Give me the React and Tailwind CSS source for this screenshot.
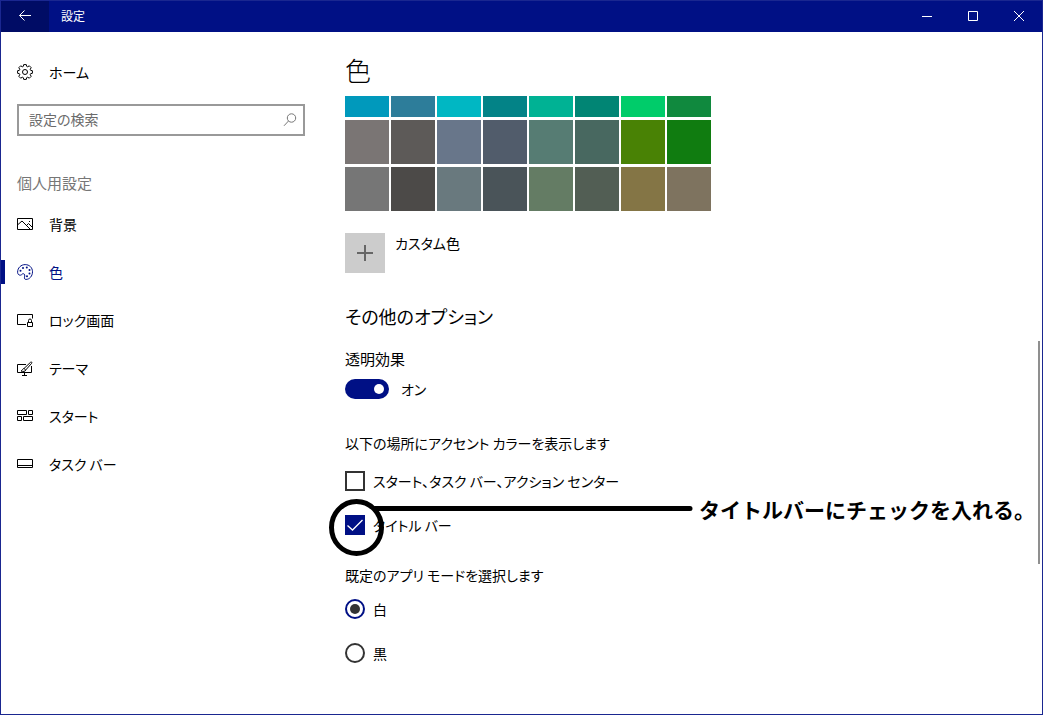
import React, { useState } from 'react';

const HomeIcon = () => (
  <svg className="w-4 h-4" viewBox="0 0 16 16" fill="none" stroke="currentColor">
    <path d="M6.7 0.6h2.6l.4 1.8 1 .4 1.6-1 1.9 1.9-1 1.6.4 1 1.8.4v2.6l-1.8.4-.4 1 1 1.6-1.9 1.9-1.6-1-1 .4-.4 1.8H6.7l-.4-1.8-1-.4-1.6 1-1.9-1.9 1-1.6-.4-1L.6 9.3V6.700l1.800-.4.4-1-1-1.600 1.900-1.900 1.600 1 1-.4z" />
    <circle cx="8" cy="8" r="2.5" />
  </svg>
);

const PictureIcon = () => (
  <svg className="w-4 h-4" viewBox="0 0 16 16" fill="none" stroke="currentColor">
    <path d="M0.5 2.5h15v11H0.5z" />
    <path d="M1 8.5l4-3.5 8 8M9.5 9.5l2-2 4 4" />
    <path d="M12 5.5h1" />
  </svg>
);

const PaletteIcon = () => (
  <svg className="w-4 h-4" viewBox="0 0 16 16" fill="none" stroke="currentColor">
    <path d="M0.6 8.2C.6 3.8 4 .6 8.2.6c4.2 0 7.3 3 7.3 7.2 0 4.3-3 7.6-6.4 7.6-1.5 0-2-1-1.6-2.2.5-1.5.4-3.200-1.100-3.500-1.300-.2-1.600 1.500-3.100 1.500C1.500 11.200.6 9.800.6 8.200z" />
    <g fill="currentColor" stroke="none">
      <circle cx="3.5" cy="6.8" r="1" />
      <circle cx="6" cy="4" r="1" />
      <circle cx="9.8" cy="3.5" r="1" />
      <circle cx="12.5" cy="6" r="1" />
      <circle cx="12.5" cy="9.5" r="1" />
      <circle cx="10" cy="12.3" r="1" />
    </g>
  </svg>
);

const LockScreenIcon = () => (
  <svg className="w-4 h-4" viewBox="0 0 16 16" fill="none" stroke="currentColor">
    <path d="M9 12.5H0.5v-10h15v4" />
    <path d="M10.5 10.5h5v4h-5zM11.5 10.5v-2a1.5 1.5 0 0 1 3 0v2" />
  </svg>
);

const ThemeIcon = () => (
  <svg className="w-4 h-4" viewBox="0 0 16 16" fill="none" stroke="currentColor">
    <path d="M9 4.5H0.5v8h14V6M7.5 13v2M5 15.5h5" />
    <path d="M7 8.5l6.5-6.2c1-.8 1.9.2 1.1 1.1L8.7 10zM7 8.5c-1.500 0-1.600 2-3 2.500 2 .8 4.500.6 4.700-1" />
  </svg>
);

const StartIcon = () => (
  <svg className="w-4 h-4" viewBox="0 0 16 16" fill="none" stroke="currentColor">
    <path d="M0.5 2.5h9v4h-9zM11.5 2.5h4v4h-4zM0.5 8.5h4v4h-4zM6.5 8.5h9v4h-9z" />
  </svg>
);

const TaskbarIcon = () => (
  <svg className="w-4 h-4" viewBox="0 0 16 16" fill="none" stroke="currentColor">
    <path d="M0.5 3.5h15v8H0.5zM0.5 9.5h15" />
  </svg>
);

const navItems = [
  { label: '背景', Icon: PictureIcon },
  { label: '色', Icon: PaletteIcon },
  { label: 'ロック画面', Icon: LockScreenIcon },
  { label: 'テーマ', Icon: ThemeIcon },
  { label: 'スタート', Icon: StartIcon },
  { label: 'タスク バー', Icon: TaskbarIcon },
];

// The first row is partly scrolled under the page heading
const swatchRows = [
  {
    height: 'h-[21px]',
    colors: ['bg-[#0099bc]', 'bg-[#2d7d9a]', 'bg-[#00b7c3]', 'bg-[#038387]', 'bg-[#00b294]', 'bg-[#018574]', 'bg-[#00cc6a]', 'bg-[#10893e]'],
  },
  {
    height: 'h-11',
    colors: ['bg-[#7a7574]', 'bg-[#5d5a58]', 'bg-[#68768a]', 'bg-[#515c6b]', 'bg-[#567c73]', 'bg-[#486860]', 'bg-[#498205]', 'bg-[#107c10]'],
  },
  {
    height: 'h-11',
    colors: ['bg-[#767676]', 'bg-[#4c4a48]', 'bg-[#69797e]', 'bg-[#4a5459]', 'bg-[#647c64]', 'bg-[#525e54]', 'bg-[#847545]', 'bg-[#7e735f]'],
  },
];

const TitleBar = () => (
  <header className="flex h-[31px] bg-[#001085] text-white">
    <button aria-label="戻る" className="flex w-12 items-center justify-center bg-[#000c65] pb-px">
      <svg className="h-4 w-4" viewBox="0 0 16 16" fill="none" stroke="currentColor">
        <path d="M14 7.5H2.5M7.5 2.5l-5 5 5 5" />
      </svg>
    </button>
    <h1 className="flex flex-1 items-center pb-0.5 pl-3 text-xs">設定</h1>
    <button aria-label="最小化" className="flex w-[46px] items-center justify-center pb-px">
      <svg className="h-[10px] w-[10px]" viewBox="0 0 10 10" stroke="currentColor">
        <path d="M0 5.5h10" />
      </svg>
    </button>
    <button aria-label="最大化" className="flex w-[46px] items-center justify-center pb-px">
      <svg className="h-[10px] w-[10px]" viewBox="0 0 10 10" fill="none" stroke="currentColor">
        <path d="M0.5 0.5h9v9h-9z" />
      </svg>
    </button>
    <button aria-label="閉じる" className="flex w-[46px] items-center justify-center pb-px">
      <svg className="h-[10px] w-[10px]" viewBox="0 0 10 10" stroke="currentColor">
        <path d="M0 0l10 10M10 0L0 10" />
      </svg>
    </button>
  </header>
);

const Sidebar = () => (
  <aside className="w-[304px] shrink-0 pt-4">
    <a href="#home" className="flex h-12 items-center gap-4 pl-4">
      <HomeIcon />
      ホーム
    </a>
    <div className="mt-2 ml-4 flex h-8 items-center border-2 border-[#999999] pr-1.5">
      <input
        type="text"
        aria-label="設定の検索"
        placeholder="設定の検索"
        className="min-w-0 flex-1 pb-0.5 pl-[10px] outline-none placeholder:text-[#6b6b6b]"
      />
      <svg className="h-[14px] w-[14px] text-[#777777]" viewBox="0 0 14 14" fill="none" stroke="currentColor">
        <circle cx="8.5" cy="5" r="4.2" />
        <path d="M5.500 8L1 12.800" />
      </svg>
    </div>
    <h2 className="mt-[35px] mb-[5px] ml-4 h-6 text-[15px] leading-6 text-[#767676]">個人用設定</h2>
    <nav>
      {navItems.map(({ label, Icon }) => (
        <a
          key={label}
          href={`#${label}`}
          className={`flex h-12 items-center ${label === '色' ? 'text-[#001085]' : ''}`}
        >
          <span className={`mr-3 h-6 w-1 ${label === '色' ? 'bg-[#001085]' : ''}`} />
          <Icon />
          <span className="ml-4">{label}</span>
        </a>
      ))}
    </nav>
  </aside>
);

const CheckRow = ({ label, checked, onChange, children }) => (
  <div className="relative mt-6 flex h-5 items-center first:mt-0">
    <label className="flex items-center gap-2">
      <span className="grid">
        <input
          type="checkbox"
          checked={checked}
          onChange={onChange}
          className="col-start-1 row-start-1 h-5 w-5 appearance-none border-2 border-[#333333] checked:border-[#001085] checked:bg-[#001085]"
        />
        {checked && (
          <svg className="pointer-events-none col-start-1 row-start-1 h-5 w-5 text-white" viewBox="0 0 20 20" fill="none" stroke="currentColor" strokeWidth="1.3">
            <path d="M2.5 10.5l5 4.5L17.5 5" />
          </svg>
        )}
      </span>
      {label}
    </label>
    {children}
  </div>
);

const RadioRow = ({ label, checked, onChange }) => (
  <label className="mt-6 flex h-5 items-center gap-2 first:mt-0">
    <input
      type="radio"
      name="app-mode"
      checked={checked}
      onChange={onChange}
      className="grid h-5 w-5 appearance-none place-items-center rounded-full border-2 border-[#333333] checked:border-[#001085] checked:before:h-[10px] checked:before:w-[10px] checked:before:rounded-full checked:before:bg-[#333333]"
    />
    {label}
  </label>
);

// Hand-drawn marker that points at the title bar option
const Callout = () => (
  <div className="pointer-events-none absolute -top-4 -left-4 flex items-start">
    <svg className="h-[58px] w-[364px] shrink-0 overflow-visible" viewBox="0 0 364 58" fill="none" stroke="#000" strokeWidth="5">
      <ellipse cx="27.500" cy="28.500" rx="25" ry="26" />
      <path d="M46 9.500H361" strokeLinecap="round" />
    </svg>
    <strong className="ml-1.5 text-[21px] leading-5 font-bold whitespace-nowrap [font-feature-settings:normal]">
      タイトルバーにチェックを入れる。
    </strong>
  </div>
);

export default function App() {
  const [transparent, setTransparent] = useState(true);
  const [showOnStart, setShowOnStart] = useState(false);
  const [showOnTitle, setShowOnTitle] = useState(true);
  const [mode, setMode] = useState('白');

  return (
    <div className="flex min-h-screen flex-col border border-[#1a2790] bg-white font-['Noto_Sans_CJK_JP',sans-serif] text-sm leading-5 font-normal text-black [font-feature-settings:'palt']">
      <TitleBar />
      <div className="relative flex flex-1">
        <Sidebar />
        <main className="min-w-0 flex-1 pt-5 pl-10">
          <h2 className="mb-2 text-[26px] leading-9 font-light">色</h2>

          <div className="flex flex-col gap-[3px]">
            {swatchRows.map((row, i) => (
              <div key={i} className="flex gap-0.5">
                {row.colors.map((color) => (
                  <button key={color} aria-label="アクセント カラー" className={`w-11 ${row.height} ${color}`} />
                ))}
              </div>
            ))}
          </div>

          <button className="mt-[22px] flex items-start gap-[10px]">
            <span className="flex h-10 w-10 items-center justify-center bg-[#cccccc]">
              <svg className="h-4 w-4" viewBox="0 0 16 16" stroke="#666" strokeWidth="2">
                <path d="M8 0v16M0 8h16" />
              </svg>
            </span>
            カスタム色
          </button>

          <h3 className="mt-7 text-lg leading-[30px]">その他のオプション</h3>

          <p id="transparency" className="mt-[18px] text-[15px]">透明効果</p>
          <label className="mt-[10px] flex h-5 w-fit items-center gap-3">
            <input
              type="checkbox"
              role="switch"
              aria-labelledby="transparency"
              checked={transparent}
              onChange={(e) => setTransparent(e.target.checked)}
              className="flex h-5 w-11 appearance-none items-center rounded-full bg-[#999999] px-[5px] before:h-[10px] before:w-[10px] before:rounded-full before:bg-white checked:justify-end checked:bg-[#001085]"
            />
            {transparent ? 'オン' : 'オフ'}
          </label>

          <p className="mt-[34px]">以下の場所にアクセント カラーを表示します</p>
          <div className="mt-[18px]">
            <CheckRow
              label="スタート、タスク バー、アクション センター"
              checked={showOnStart}
              onChange={(e) => setShowOnStart(e.target.checked)}
            />
            <CheckRow
              label="タイトル バー"
              checked={showOnTitle}
              onChange={(e) => setShowOnTitle(e.target.checked)}
            >
              <Callout />
            </CheckRow>
          </div>

          <p className="mt-[30px]">既定のアプリ モードを選択します</p>
          <div className="mt-[14px]">
            <RadioRow label="白" checked={mode === '白'} onChange={() => setMode('白')} />
            <RadioRow label="黒" checked={mode === '黒'} onChange={() => setMode('黒')} />
          </div>
        </main>
        {/* Scroll thumb */}
        <div className="absolute top-[309px] right-0.5 h-[223px] w-0.5 bg-[#8f8f8f]" />
      </div>
    </div>
  );
}
